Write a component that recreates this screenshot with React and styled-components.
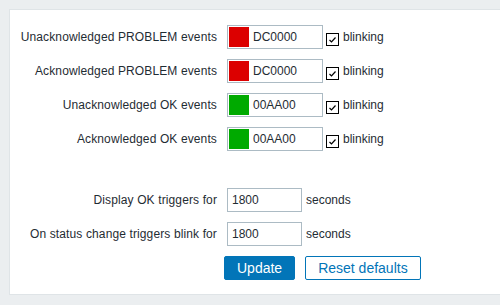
import React from "react";
import styled, { createGlobalStyle } from "styled-components";

const Global = createGlobalStyle`
  html, body { margin: 0; padding: 0; }
  body {
    background: #ebeef0;
    font-family: "Liberation Sans", Arial, sans-serif;
    font-size: 12px;
    color: #1f2c33;
    overflow: hidden;
  }
`;

const Panel = styled.div`
  margin: 9px 0 0 9px;
  height: 286px;
  box-sizing: border-box;
  background: #ffffff;
  border: 1px solid #dfe4e7;
  border-right: none;
  padding-top: 15px;
`;

const Form = styled.div`
  display: grid;
  grid-template-columns: 207px auto;
  column-gap: 10px;
  row-gap: 10px;
  align-items: center;
`;

const Label = styled.div`
  text-align: right;
  line-height: 24px;
  white-space: nowrap;
  letter-spacing: 0.12px;
  margin-top: ${(p) => p.$gapTop || 0}px;
`;

const Field = styled.div`
  display: flex;
  align-items: center;
  height: 24px;
  margin-top: ${(p) => p.$gapTop || 0}px;
`;

const ColorBox = styled.div`
  box-sizing: border-box;
  width: 96px;
  height: 24px;
  border: 1px solid #acbbc4;
  padding: 1px;
  display: flex;
  align-items: center;
  gap: 4px;
`;

const Swatch = styled.div`
  width: 20px;
  height: 20px;
  background: ${(p) => p.$color};
`;

const ColorText = styled.span`
  font-size: 12px;
`;

const Check = styled.span`
  box-sizing: border-box;
  width: 13px;
  height: 13px;
  border: 1px solid #000;
  margin: 4px 0 0 3px;
  display: inline-flex;
  align-items: center;
  justify-content: center;
  background: #fff;
`;

const CheckText = styled.span`
  margin-left: 4px;
`;

const NumInput = styled.div`
  box-sizing: border-box;
  width: 75px;
  height: 24px;
  border: 1px solid #acbbc4;
  padding: 0 4px;
  line-height: 22px;
`;

const Unit = styled.span`
  margin-left: 4px;
`;

const Buttons = styled.div`
  display: flex;
  gap: 10px;
  margin-left: -3px;
  height: 24px;
`;

const Button = styled.div`
  box-sizing: border-box;
  height: 24px;
  padding: 0 12px;
  border: 1px solid #0275b8;
  border-radius: 2px;
  font-size: 14px;
  line-height: 22px;
  background: ${(p) => (p.$primary ? "#0275b8" : "#ffffff")};
  color: ${(p) => (p.$primary ? "#ffffff" : "#0275b8")};
`;

const CheckMark = () => (
  <svg width="9" height="9" viewBox="0 0 9 9">
    <path d="M1.5 5 L3.5 7 L7.5 2.5" fill="none" stroke="#000" strokeWidth="1.2" />
  </svg>
);

const colorRows = [
  { label: "Unacknowledged PROBLEM events", color: "#DC0000", code: "DC0000" },
  { label: "Acknowledged PROBLEM events", color: "#DC0000", code: "DC0000" },
  { label: "Unacknowledged OK events", color: "#00AA00", code: "00AA00" },
  { label: "Acknowledged OK events", color: "#00AA00", code: "00AA00" },
];

export default function App() {
  return (
    <>
      <Global />
      <Panel>
        <Form>
          {colorRows.map((r) => (
            <React.Fragment key={r.label}>
              <Label>{r.label}</Label>
              <Field>
                <ColorBox>
                  <Swatch $color={r.color} />
                  <ColorText>{r.code}</ColorText>
                </ColorBox>
                <Check>
                  <CheckMark />
                </Check>
                <CheckText>blinking</CheckText>
              </Field>
            </React.Fragment>
          ))}
          <Label $gapTop={27}>Display OK triggers for</Label>
          <Field $gapTop={27}>
            <NumInput>1800</NumInput>
            <Unit>seconds</Unit>
          </Field>
          <Label>On status change triggers blink for</Label>
          <Field>
            <NumInput>1800</NumInput>
            <Unit>seconds</Unit>
          </Field>
          <div />
          <Buttons>
            <Button $primary>Update</Button>
            <Button>Reset defaults</Button>
          </Buttons>
        </Form>
      </Panel>
    </>
  );
}
